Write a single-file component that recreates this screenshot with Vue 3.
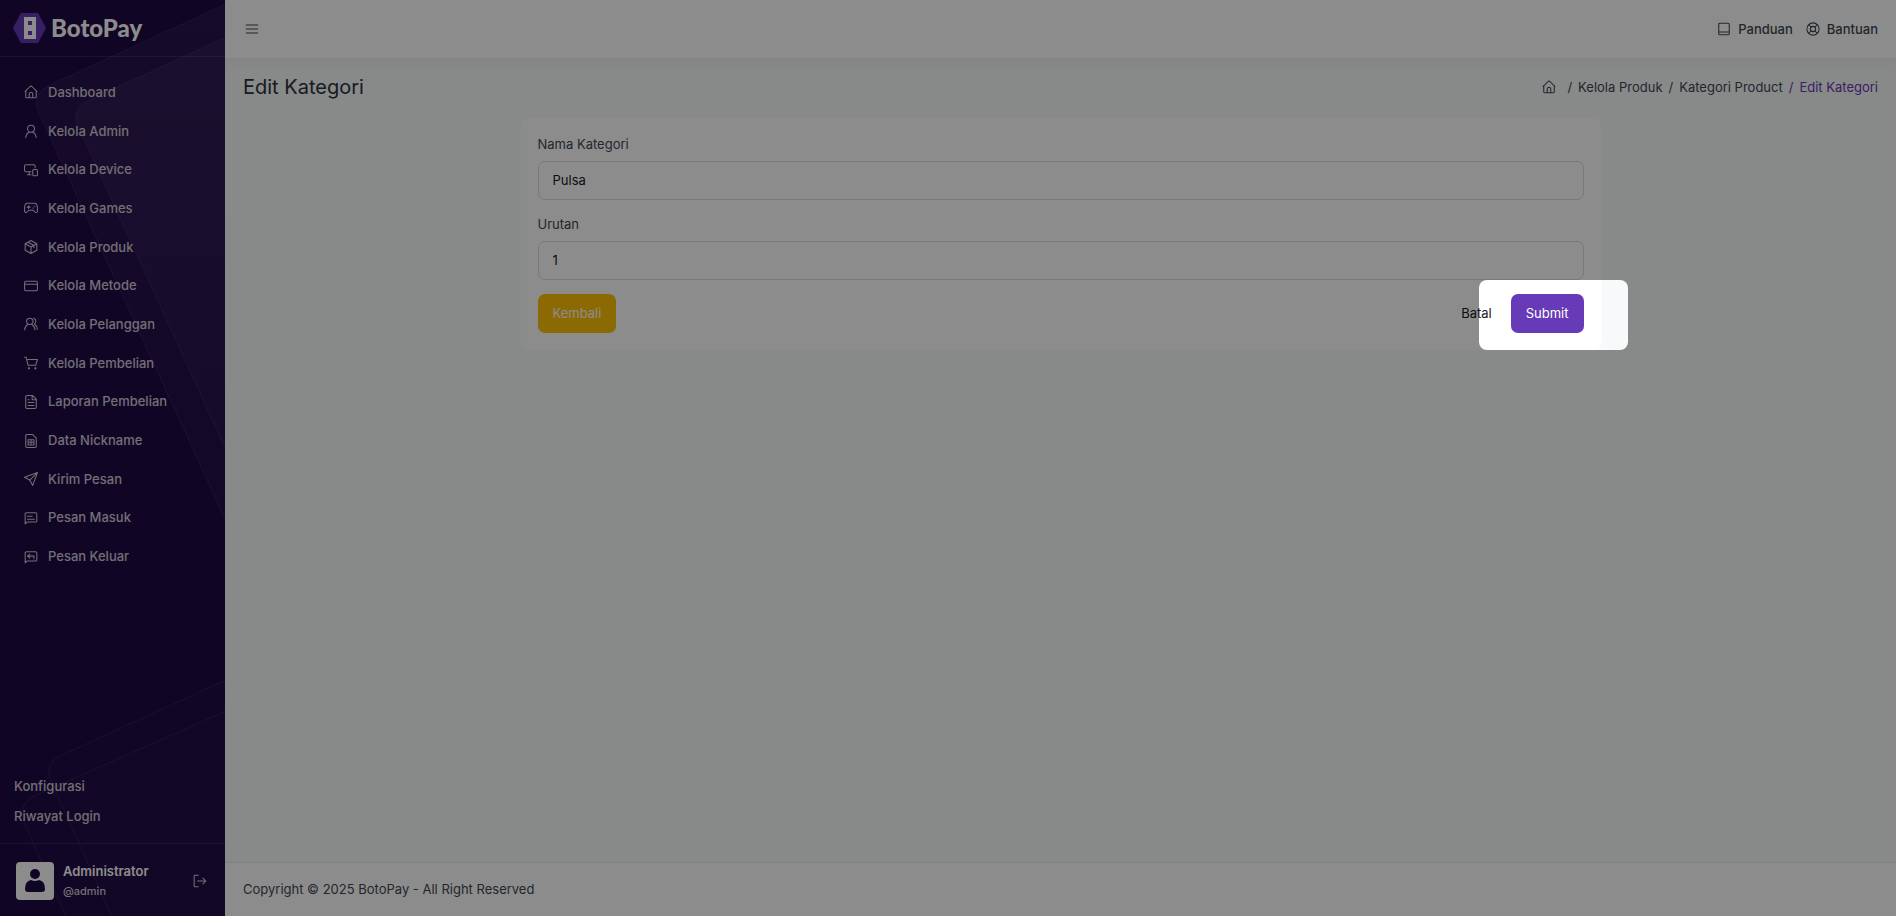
<template>
  <div class="app-layout">
    <aside class="sidebar">
      <svg class="sidebar-pattern" viewBox="0 0 225 916" aria-hidden="true">
        <defs>
          <linearGradient id="shapeFill" x1="0" y1="1" x2="0" y2="0">
            <stop offset="0" stop-color="#fff" stop-opacity="0.02" />
            <stop offset="1" stop-color="#fff" stop-opacity="0.04" />
          </linearGradient>
        </defs>
        <path
          class="shape"
          d="M226 4 L50 85 Q31 94 38 111 L226 521"
          fill="url(#shapeFill)"
        />
        <path
          class="shape"
          d="M226 37 L92 99 Q69 109 79 128 L226 450"
          fill="url(#shapeFill)"
        />
        <path
          class="shape shape-low"
          d="M226 680 L60 756 Q45 763 50 779 L112 917 H226"
        />
        <path
          class="shape shape-low"
          d="M226 711 L34 796 Q18 803 24 823 L66 917 H226"
        />
      </svg>

      <a href="#" class="brand">
        <svg width="33" height="30" viewBox="0 0 33 30" aria-hidden="true">
          <path d="M8 0 H25 L33 15 L25 30 H8 L0 15 Z" fill="#673ab7" />
          <path
            fill="#fff"
            fill-rule="evenodd"
            d="M11 4H23V26H11Z M15 8V12H19V8Z M15 18V22H19V18Z"
          />
        </svg>
        <span>BotoPay</span>
      </a>

      <nav class="menu">
        <a v-for="item in menus" :key="item.label" href="#" class="menu-link">
          <svg class="icon" viewBox="0 0 24 24" aria-hidden="true">
            <path :d="item.icon" />
          </svg>
          <span>{{ item.label }}</span>
        </a>
      </nav>

      <nav class="extra-menu">
        <a href="#">Konfigurasi</a>
        <a href="#">Riwayat Login</a>
      </nav>

      <div class="profile">
        <div class="avatar">
          <svg width="20" height="24" viewBox="0 0 20 24" aria-hidden="true">
            <circle cx="10" cy="5" r="5" />
            <path
              d="M6 11 Q10 13 14 11 Q20 12 20 20 Q20 23 17 23 H3 Q0 23 0 20 Q0 12 6 11 Z"
            />
          </svg>
        </div>
        <div class="profile-info">
          <strong>Administrator</strong>
          <small>@admin</small>
        </div>
        <button type="button" class="icon-btn logout" aria-label="Logout">
          <svg class="icon" viewBox="0 0 24 24" aria-hidden="true">
            <path d="M9 2H4Q2 2 2 4V20Q2 22 4 22H9 M8 12H22 M17 7L22 12L17 17" />
          </svg>
        </button>
      </div>
    </aside>

    <div class="page">
      <header class="topbar">
        <button type="button" class="icon-btn" aria-label="Toggle menu">
          <svg class="icon" viewBox="0 0 24 24" aria-hidden="true">
            <path d="M2 5H22 M2 12H22 M2 19H22" />
          </svg>
        </button>
        <div class="topbar-links">
          <a href="#">
            <svg class="icon" viewBox="0 0 24 24" aria-hidden="true">
              <path
                d="M5 2H19Q21 2 21 4V20Q21 22 19 22H5Q3 22 3 20V4Q3 2 5 2Z M3 17H21"
              />
            </svg>
            <span>Panduan</span>
          </a>
          <a href="#">
            <svg class="icon" viewBox="0 0 24 24" aria-hidden="true">
              <circle cx="12" cy="12" r="10.5" />
              <circle cx="12" cy="12" r="4.5" />
              <path d="M4.5 4.5L9 9 M15 9L19.5 4.5 M15 15L19.5 19.5 M9 15L4.5 19.5" />
            </svg>
            <span>Bantuan</span>
          </a>
        </div>
      </header>

      <main class="content">
        <div class="page-head">
          <h1>Edit Kategori</h1>
          <ol class="breadcrumb">
            <li>
              <a href="#" class="home" aria-label="Dashboard">
                <svg class="icon" viewBox="0 0 24 24" aria-hidden="true">
                  <path :d="menus[0].icon" />
                </svg>
              </a>
            </li>
            <li><a href="#">Kelola Produk</a></li>
            <li><a href="#">Kategori Product</a></li>
            <li class="active">Edit Kategori</li>
          </ol>
        </div>

        <div class="row">
          <form class="card" @submit.prevent>
            <div class="form-group">
              <label for="nama">Nama Kategori</label>
              <input id="nama" v-model="form.nama" type="text" />
            </div>
            <div class="form-group">
              <label for="urutan">Urutan</label>
              <input id="urutan" v-model="form.urutan" type="text" />
            </div>
            <div class="actions">
              <button type="button" class="btn btn-warning">Kembali</button>
              <div class="actions-right">
                <button type="reset" class="btn btn-link">Batal</button>
                <div class="highlight-target">
                  <button type="submit" class="btn btn-primary">Submit</button>
                  <div class="spotlight"></div>
                </div>
              </div>
            </div>
          </form>
        </div>
      </main>

      <footer class="footer">
        Copyright © 2025 BotoPay - All Right Reserved
      </footer>
    </div>
  </div>
</template>

<script setup>
import { reactive } from "vue";

const form = reactive({
  nama: "Pulsa",
  urutan: "1",
});

const menus = [
  {
    label: "Dashboard",
    icon: "M2 11L10 3Q12 1 14 3L22 11 M3 10V20Q3 22 5 22H19Q21 22 21 20V10 M9 22V15Q9 13 11 13H13Q15 13 15 15V22",
  },
  {
    label: "Kelola Admin",
    icon: "M12 2A6 6 0 1 1 12 14A6 6 0 1 1 12 2 M3 23Q4 16 9 14 M21 23Q20 16 15 14",
  },
  {
    label: "Kelola Device",
    icon: "M19 8V5Q19 3 17 3H3Q1 3 1 5V13Q1 15 3 15H12 M9 15V20 M6 20H12 M17 11H21Q23 11 23 13V20Q23 22 21 22H17Q15 22 15 20V13Q15 11 17 11Z",
  },
  {
    label: "Kelola Games",
    icon: "M5 4H19Q23 5 23 12V18Q21 22 18 18L16 16H8L6 18Q3 22 1 18V12Q1 5 5 4Z M8 8V13 M5.5 10.5H10.5 M15 12H16 M18 9H19",
  },
  {
    label: "Kelola Produk",
    icon: "M12 1L22 6.5V17.5L12 23L2 17.5V6.5Z M2 6.5L12 12L22 6.5 M12 12V23 M7 4L17 9.5V13",
  },
  {
    label: "Kelola Metode",
    icon: "M3 4H21Q23 4 23 6V18Q23 20 21 20H3Q1 20 1 18V6Q1 4 3 4Z M1 9H23",
  },
  {
    label: "Kelola Pelanggan",
    icon: "M10 2A5.5 5.5 0 1 1 10 13A5.5 5.5 0 1 1 10 2 M1 22Q2 15 7 12.5 M19 22Q18 15 13 12.5 M17 2Q21 4 20 8Q20 10 18 12Q22 15 23 21",
  },
  {
    label: "Kelola Pembelian",
    icon: "M1 2H3.5L7 16H20L23 6H5 M7.5 21A1 1 0 1 1 7.5 21.1 M18.5 21A1 1 0 1 1 18.5 21.1",
  },
  {
    label: "Laporan Pembelian",
    icon: "M5 1H15L21 7V21Q21 23 19 23H5Q3 23 3 21V3Q3 1 5 1Z M14 1V8H21 M7 8H9 M7 13H17 M7 18H17",
  },
  {
    label: "Data Nickname",
    icon: "M5 1H15L21 7V21Q21 23 19 23H5Q3 23 3 21V3Q3 1 5 1Z M7 10H17V19H7Z M7 14H17 M12 10V19",
  },
  {
    label: "Kirim Pesan",
    icon: "M23 1L1 9L10 14L15 23Z M23 1L10 14",
  },
  {
    label: "Pesan Masuk",
    icon: "M2 22V5Q2 3 4 3H20Q22 3 22 5V17Q22 19 20 19H5Z M6 9H14 M6 14H18",
  },
  {
    label: "Pesan Keluar",
    icon: "M2 22V5Q2 3 4 3H20Q22 3 22 5V17Q22 19 20 19H5Z M10 7L6 10.5L10 14 M6 10.5H17V15",
  },
];
</script>

<style>
body {
  margin: 0;
}
</style>

<style scoped>
.app-layout {
  display: flex;
  min-height: 100vh;
  overflow: hidden;
  font-family: Inter, "Liberation Sans", sans-serif;
  font-size: 13px;
  line-height: 18px;
  color: #3e4853;
  background-color: #f8f9fa;
}
.app-layout * {
  box-sizing: border-box;
}
a {
  color: inherit;
  text-decoration: none;
}
button,
input {
  font: inherit;
}
.icon {
  width: 14px;
  height: 14px;
  flex: none;
  fill: none;
  stroke: currentColor;
  stroke-width: 1.8;
  stroke-linecap: round;
  stroke-linejoin: round;
}
.icon-btn {
  display: flex;
  padding: 0;
  border: 0;
  background: none;
  color: inherit;
}

/* sidebar */
.sidebar {
  position: relative;
  display: flex;
  flex-direction: column;
  flex: none;
  width: 225px;
  background-color: #200a46;
  color: #cfcbd6;
  font-weight: 500;
}
.sidebar > * {
  position: relative;
}
.sidebar > .sidebar-pattern {
  position: absolute;
  top: 0;
  left: 0;
  width: 225px;
}
.shape {
  stroke: rgba(255, 255, 255, 0.08);
}
.shape-low {
  fill: rgba(255, 255, 255, 0.01);
}
.brand {
  display: flex;
  align-items: center;
  gap: 5px;
  height: 57px;
  padding-left: 13px;
  border-bottom: 1px solid rgba(255, 255, 255, 0.1);
  color: #fff;
  font-family: Lato, sans-serif;
  font-size: 24px;
  font-weight: 900;
}
.menu {
  display: grid;
  grid-auto-rows: 1fr;
  height: 503px;
  margin-top: 16px;
}
.menu-link {
  display: flex;
  align-items: center;
  gap: 10px;
  padding-left: 24px;
}
.menu-link span,
.topbar-links span {
  padding-bottom: 1px;
}
.extra-menu {
  display: grid;
  gap: 12px;
  margin-top: auto;
  padding: 0 14px 18px;
}
.profile {
  display: flex;
  align-items: center;
  height: 73px;
  padding: 2px 18px 0 16px;
  border-top: 1px solid rgba(255, 255, 255, 0.1);
}
.avatar {
  display: grid;
  place-items: center;
  width: 38px;
  height: 38px;
  border-radius: 4px;
  background-color: #fff;
}
.avatar svg {
  fill: #200a46;
}
.profile-info {
  display: grid;
  gap: 2px;
  padding: 0 0 1px 9px;
}
.profile-info strong {
  color: #fff;
  font-weight: 600;
}
.profile-info small {
  font-size: 11px;
}
.logout {
  margin-left: auto;
}

/* content */
.page {
  display: flex;
  flex-direction: column;
  flex: 1;
  min-width: 0;
}
.topbar {
  display: flex;
  align-items: center;
  justify-content: space-between;
  height: 58px;
  padding: 0 18px 0 20px;
  background-color: #fff;
  box-shadow: 0 2px 16px rgba(0, 0, 0, 0.06);
}
.topbar-links {
  display: flex;
  gap: 13px;
  font-weight: 500;
}
.topbar-links a {
  display: flex;
  align-items: center;
  gap: 7px;
}
.content {
  flex: 1;
  padding: 15px 18px;
}
.page-head {
  display: flex;
  align-items: center;
  justify-content: space-between;
  height: 28px;
  margin-bottom: 16px;
}
h1 {
  margin: 0;
  font-size: 20px;
  font-weight: 400;
  color: #2b333c;
}
.breadcrumb {
  display: flex;
  margin: 0;
  padding: 0;
  list-style: none;
}
.breadcrumb li {
  display: flex;
  align-items: center;
}
.breadcrumb a {
  display: flex;
}
.breadcrumb .home {
  padding-right: 5px;
}
.breadcrumb li + li::before {
  content: "/";
  padding: 0 6px;
}
.breadcrumb .active {
  color: #673ab7;
}
.row {
  display: grid;
  grid-template-columns: repeat(12, 1fr);
  gap: 24px;
}
.card {
  grid-column: 3 / span 8;
  padding: 17px;
  border: 1px solid #fafbfc;
  border-radius: 8px;
  background-color: #fff;
}
.form-group {
  display: grid;
  gap: 8px;
}
.form-group + .form-group {
  margin-top: 15px;
}
.form-group input {
  width: 100%;
  height: 39px;
  padding: 0 14px 2px;
  border: 1px solid #dbdcde;
  border-radius: 7px;
  background-color: #fff;
  color: #131920;
}
.actions,
.actions-right {
  display: flex;
  justify-content: space-between;
}
.actions {
  margin-top: 14px;
}
.actions-right {
  gap: 4px;
}
.btn {
  height: 39px;
  padding: 0 14px 2px;
  border: 1px solid transparent;
  border-radius: 7px;
  color: #fff;
}
.btn-warning {
  background-color: #ffc107;
}
.btn-primary {
  background-color: #673ab7;
}
.btn-link {
  background-color: transparent;
  color: #131920;
}

/* dims the whole page except the area around the target */
.highlight-target {
  position: relative;
}
.spotlight {
  position: absolute;
  z-index: 10;
  top: -14px;
  right: -44px;
  width: 149px;
  height: 70px;
  border-radius: 8px;
  box-shadow: 0 0 0 9999px rgba(0, 0, 0, 0.45);
  pointer-events: none;
}

.footer {
  padding: 17px 18px 18px;
  border-top: 1px solid #e7eaee;
  background-color: #fff;
}
</style>
